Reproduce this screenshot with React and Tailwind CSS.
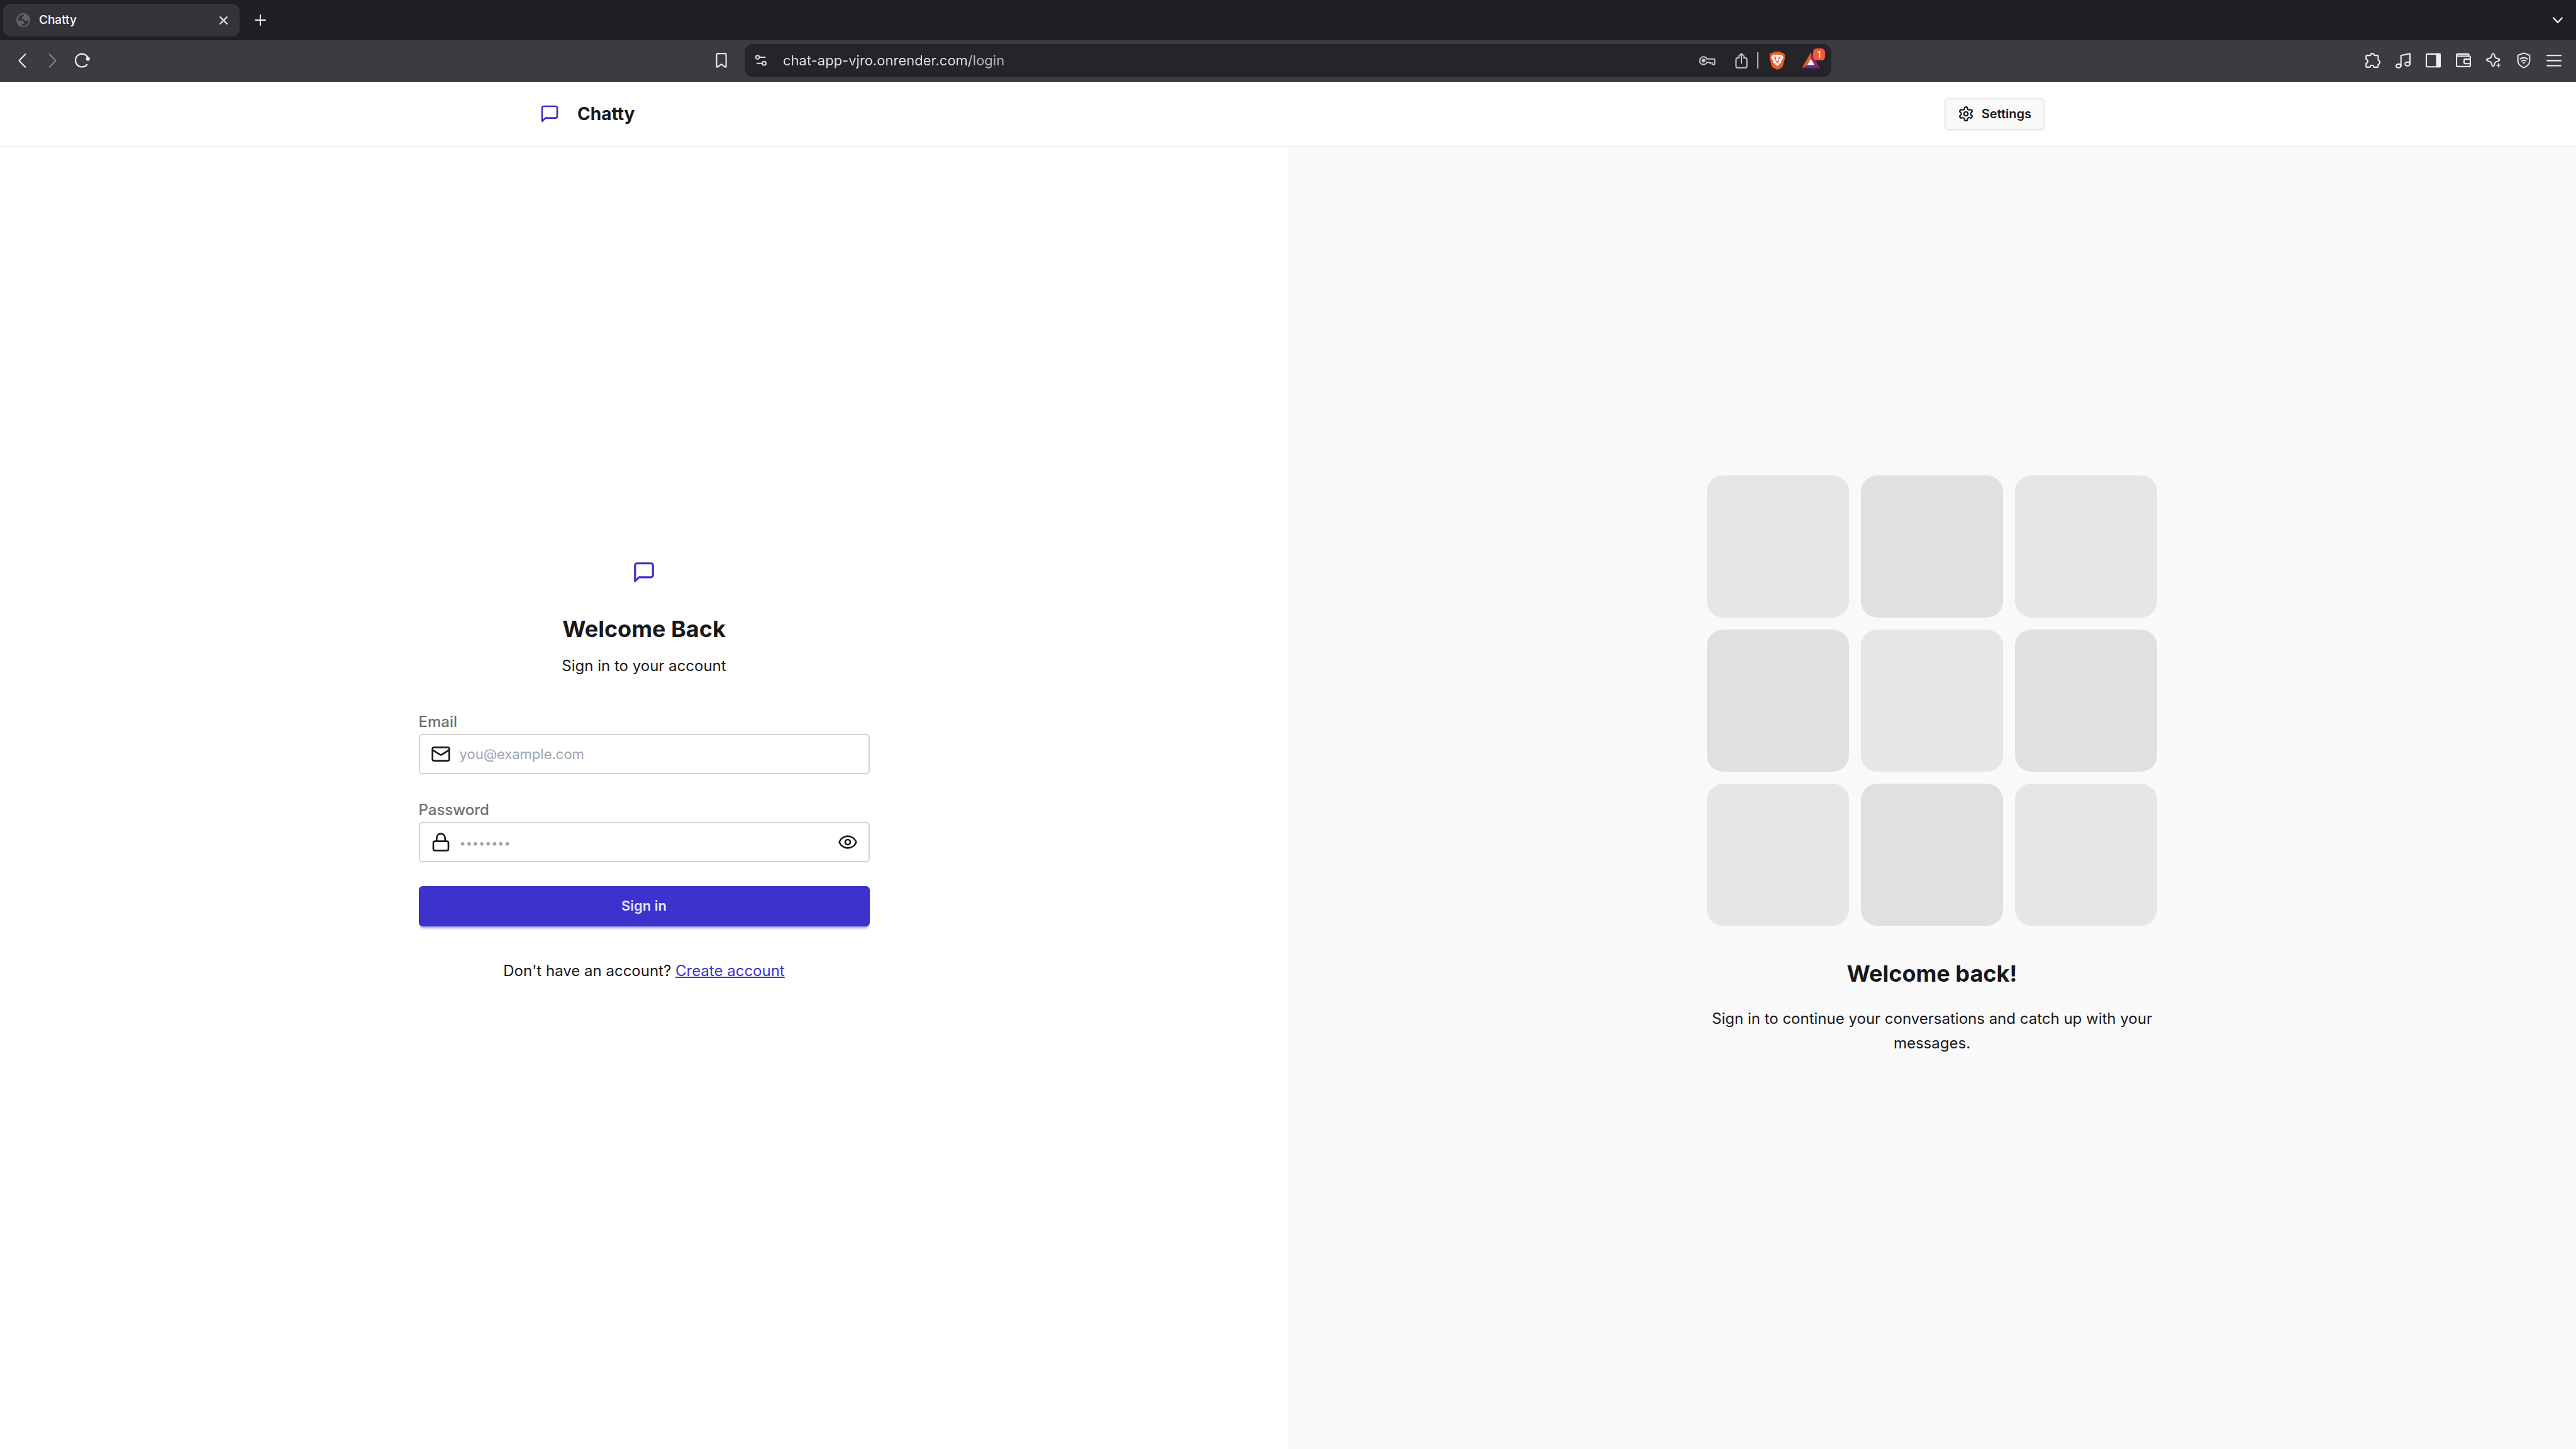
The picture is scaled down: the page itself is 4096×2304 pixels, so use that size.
import { useState } from "react";
import { Mail, Lock, Eye, EyeOff } from "lucide-react";

const Line = ({ box, className, width = 2.6, children }) => (
  <svg
    viewBox={box}
    className={className}
    fill="none"
    stroke="currentColor"
    strokeWidth={width}
    strokeLinecap="round"
    strokeLinejoin="round"
    aria-hidden="true"
  >
    {children}
  </svg>
);

const MessageSquare = ({ className }) => (
  <Line box="0 0 24 24" className={className} width={2}>
    <path d="M21 15a2 2 0 0 1-2 2H7l-4 4V5a2 2 0 0 1 2-2h14a2 2 0 0 1 2 2z" />
  </Line>
);

const Gear = ({ className }) => (
  <Line box="0 0 24 24" className={className} width={2}>
    <path d="M12.22 2h-.44a2 2 0 0 0-2 2v.18a2 2 0 0 1-1 1.730l-.43.25a2 2 0 0 1-2 0l-.15-.08a2 2 0 0 0-2.730.73l-.22.38a2 2 0 0 0 .73 2.730l.15.1a2 2 0 0 1 1 1.720v.51a2 2 0 0 1-1 1.740l-.15.09a2 2 0 0 0-.73 2.730l.22.38a2 2 0 0 0 2.730.73l.15-.08a2 2 0 0 1 2 0l.43.25a2 2 0 0 1 1 1.730V20a2 2 0 0 0 2 2h.44a2 2 0 0 0 2-2v-.18a2 2 0 0 1 1-1.730l.43-.25a2 2 0 0 1 2 0l.15.08a2 2 0 0 0 2.730-.73l.22-.39a2 2 0 0 0-.73-2.730l-.15-.08a2 2 0 0 1-1-1.740v-.5a2 2 0 0 1 1-1.740l.15-.09a2 2 0 0 0 .73-2.730l-.22-.38a2 2 0 0 0-2.730-.73l-.15.08a2 2 0 0 1-2 0l-.43-.25a2 2 0 0 1-1-1.730V4a2 2 0 0 0-2-2z" />
    <circle cx="12" cy="12" r="3" />
  </Line>
);

const GlobeIcon = () => (
  <svg viewBox="0 0 28 28" className="size-[22px] shrink-0" aria-hidden="true">
    <circle cx="14" cy="14" r="14" fill="#5f6368" />
    <path
      fill="#343338"
      d="M15.5 3C15.5 6 14 6.5 12.5 6.5 11.5 7 11 8 11 10.5c0 1 2 1 4 1 0 3 3 4 5 4s2.5-1.5 5-1.5A11 11 0 0 1 11 25v-3c3 .5 4.5-.5 4.5-2.5.5-3.500-2.5-3.700-3.500-5H3A11 11 0 0 1 15.5 3Z"
    />
  </svg>
);

const BraveLion = () => (
  <svg viewBox="0 0 32 36" className="h-[29px] w-[26px]" aria-hidden="true">
    <path
      fill="#f05a28"
      d="M10 0h12l3.5 3 3-.5L31.5 7l-1 3 .8 2.5-4.300 16c-.5 1.500-1.200 2.300-2.400 3.200L16 36l-8.600-4.300C6.200 30.800 5.500 30 5 28.500L.7 12.500l.8-2.500L.5 7l3-4.500 3 .5Z"
    />
    <path
      fill="#fff"
      d="M4 10.500 8.500 6l3.500.8 4-.8 4 .8 3.500-.8 4.500 4.500-.8 3.500-3.700 5 .8 2.500-2.800 2.300-2.500-1.600L16 20.600l-3 1.600-2.500 1.600-2.800-2.300.8-2.500L4.800 14Z"
    />
    <path fill="#fff" d="M10.800 24.400 16 21.800l5.200 2.600L16 28.500Z" />
    <path
      fill="#f05a28"
      d="M7 10.200l5.500-.2 1.500 1-.4 3 .6 3-2.700 1.700L14 20l2 .9 2-.9 2.500-1.300L17.800 17l.6-3-.4-3 1.500-1 5.500.2-3.500 1.200-1.600.8 3.600.7-2.500 1.600-1.500 0 .4 2 .4.7-2.300 1.100-2-.4-2 .4-2.300-1.100.4-.7.4-2-1.500 0-2.500-1.600 3.600-.7-1.600-.8Z"
    />
  </svg>
);

const BatLogo = () => (
  <svg viewBox="0 0 36 32" className="h-[26px] w-[29px]" aria-hidden="true">
    <path fill="#f15a2b" d="M18 0v12.700L10.700 25.300 0 31.500Z" />
    <path fill="#9e1f63" d="M18 0v12.700l7.300 12.600L36 31.500Z" />
    <path fill="#5f2c91" d="M0 31.500h36l-10.700-6.200H10.700Z" />
    <path fill="#fff" d="M18 12.700 10.700 25.300h14.600Z" />
  </svg>
);

const TOOLS = [
  {
    label: "Extensions",
    art: (
      <Line box="0 0 30 30" className="size-6">
        <path d="M2.800 5.200H9.400c.8 0 1-.5 1.200-1.200C11 2.300 12.200 1.400 14 1.400s3 .9 3.400 2.600c.2.700.4 1.200 1.200 1.200h5.600c.8 0 1.300.5 1.300 1.300v7.200c0 .8.500 1.100 1.200 1.300 1.500.500 2.100 2 2.100 3.700s-.600 3.300-2.100 3.800c-.7.2-1.200.5-1.200 1.300v3.500c0 .8-.5 1.300-1.300 1.300h-6.700c-.8 0-1-.6-1.100-1.300-.3-1.800-1.700-2.700-3.400-2.700s-3.100.9-3.400 2.700c-.1.700-.3 1.300-1.100 1.300H2.800c-.8 0-1.300-.5-1.300-1.300v-5.600c0-.8.500-1.100 1.200-1.300 1.600-.500 2.400-1.800 2.400-3.400S4.300 14 2.700 13.500c-.7-.2-1.200-.5-1.200-1.300V6.500c0-.8.5-1.300 1.300-1.300Z" />
      </Line>
    ),
  },
  {
    label: "Media",
    art: (
      <Line box="0 0 30 32" className="h-[26px] w-6">
        <ellipse cx="6" cy="27" rx="4.8" ry="3.7" />
        <ellipse cx="23.8" cy="23.2" rx="4.8" ry="3.7" />
        <path d="M10.900 27V6.200L28.700 2.600V23" />
      </Line>
    ),
  },
  {
    label: "Sidebar",
    art: (
      <Line box="0 0 30 30" className="size-6">
        <rect x="1.3" y="2.3" width="27.4" height="25.6" rx="1.3" />
        <path d="M22 2.300h5.400c.8 0 1.300.5 1.300 1.300v23c0 .8-.5 1.300-1.300 1.300H22Z" fill="currentColor" />
      </Line>
    ),
  },
  {
    label: "Wallet",
    art: (
      <Line box="0 0 30 30" className="size-6">
        <path d="M1.300 6.500V4.300c0-1.200.8-2 2-2h20.400c1.300 0 2 1 2 2.200v2" />
        <path d="M1.300 6.500h25.400c1.200 0 2 .8 2 2v16.600c0 1.200-.8 2-2 2H3.300c-1.200 0-2-.8-2-2Z" />
        <path d="M28.700 12.700H18c-1 0-1.700.7-1.700 1.700v5.400c0 1 .7 1.700 1.700 1.700h10.700" />
      </Line>
    ),
  },
  {
    label: "Leo AI",
    art: (
      <Line box="0 0 30 30" className="size-6" width={2.4}>
        <path d="M12 2.800c.7-1.900 3.300-1.900 4 0l1.800 5.400c.4 1 1 1.700 2 2l5.600 2c1.800.6 1.800 2.900 0 3.500l-5.600 2c-1 .3-1.600 1-2 2L16 25.100c-.7 1.900-3.300 1.900-4 0l-1.800-5.400c-.4-1-1-1.700-2-2l-5.600-2c-1.800-.6-1.800-2.900 0-3.500l5.600-2c1-.3 1.600-1 2-2Z" />
        <path
          d="M24.700 19.500l1.400 3.800 3.800 1.400-3.800 1.400-1.400 3.800-1.400-3.800-3.800-1.400 3.800-1.400Z"
          fill="currentColor"
          stroke="#3c3b3f"
          strokeWidth="3"
          paintOrder="stroke"
        />
      </Line>
    ),
  },
  {
    label: "VPN",
    art: (
      <Line box="0 0 30 32" className="h-[26px] w-6" width={2.4}>
        <path d="M15 1.500l11.700 4.300v11c0 6.600-6.200 11.300-11.700 13.700C9.500 28.100 3.300 23.400 3.300 16.800v-11Z" />
        <path d="M8 13.200c4-3.400 10-3.400 14 0M11 17.300c2.400-1.900 5.600-1.900 8 0M13.800 21h2.400" />
      </Line>
    ),
  },
  {
    label: "Menu",
    art: (
      <Line box="0 0 30 30" className="size-6">
        <path d="M1.300 5.300h27.400M1.300 15.500h27.400M1.300 25.600h27.400" />
      </Line>
    ),
  },
];

function BrowserChrome() {
  return (
    <div className="shrink-0 text-[#f0f0f4]">
      <div className="flex h-16 items-center bg-[#201f24] pr-[13px] pl-[5px]">
        <div className="flex h-13 w-[376px] items-center rounded-[12px] bg-[#343338] pr-[16px] pl-[21px]">
          <GlobeIcon />
          <span className="ml-[14px] flex-1 text-[19px] font-medium text-white">Chatty</span>
          <button type="button" aria-label="Close tab" className="grid size-5 place-items-center">
            <Line box="0 0 16 16" className="size-[13px]">
              <path d="M1.500 1.500l13 13M14.500 1.500l-13 13" />
            </Line>
          </button>
        </div>
        <button type="button" aria-label="New tab" className="ml-[21px] grid size-6 place-items-center">
          <Line box="0 0 22 22" className="size-[18px]">
            <path d="M11 1.300v19.400M1.300 11h19.400" />
          </Line>
        </button>
        <button type="button" aria-label="Search tabs" className="ml-auto grid size-8 place-items-center">
          <Line box="0 0 20 13" className="h-[11px] w-4" width={3}>
            <path d="M1.500 1.500l8.500 9 8.500-9" />
          </Line>
        </button>
      </div>

      <div className="flex h-[66px] items-center border-b-2 border-[#323135] bg-[#3c3b3f]">
        <div className="flex flex-1 items-center pl-[11px]">
          <button type="button" aria-label="Back" className="grid h-8 w-12 place-items-center">
            <Line box="0 0 16 28" className="h-[23px] w-[13px]">
              <path d="M14 1.500L2.500 13c-.6.600-.6 1.400 0 2L14 26.500" />
            </Line>
          </button>
          <button type="button" aria-label="Forward" className="grid h-8 w-12 place-items-center text-[#838287]">
            <Line box="0 0 16 28" className="h-[23px] w-[13px]">
              <path d="M2 1.500L13.500 13c.6.600.6 1.400 0 2L2 26.500" />
            </Line>
          </button>
          <button type="button" aria-label="Reload" className="grid h-8 w-12 place-items-center">
            <Line box="0 0 30 30" className="size-6" width={2.8}>
              <path d="M24.200 23.500A13 13 0 1 1 26 9.500" />
              <circle cx="26" cy="12" r="3.9" fill="currentColor" stroke="none" />
            </Line>
          </button>
          <button type="button" aria-label="Bookmark" className="mr-[21px] ml-auto grid h-8 w-8 place-items-center">
            <Line box="0 0 22 30" className="h-6 w-[18px]">
              <path d="M1.500 27V4c0-1.600 1-2.600 2.600-2.600h13.800c1.600 0 2.600 1 2.600 2.600v23c0 1.300-1.300 1.900-2.300 1L11 22.500 3.800 28c-1 .9-2.300.3-2.300-1Z" />
            </Line>
          </button>
        </div>

        <div className="flex h-13 w-[1728px] items-center rounded-[13px] bg-[#252429] pr-[18px] pl-4 text-[#c5c4c9]">
          <button type="button" aria-label="Site information" className="text-[#dcdbe0]">
            <Line box="0 0 24 23" className="h-[18px] w-5">
              <circle cx="5" cy="5.2" r="3.7" />
              <path d="M10.500 5.200H20.500M4 17.700h9.500" />
              <circle cx="18.5" cy="17.5" r="3.7" />
            </Line>
          </button>
          <input
            aria-label="Address"
            defaultValue="chat-app-vjro.onrender.com/login"
            className="ml-[25px] min-w-0 flex-1 bg-[linear-gradient(90deg,#e2e1e5_298px,#b9b8bd_298px)] bg-clip-text text-[22px] text-transparent outline-none"
          />
          <button type="button" aria-label="Saved passwords" className="mr-[31px]">
            <Line box="0 0 33 19" className="h-[15px] w-[27px]">
              <path d="M16.300 6H30c1 0 1.700.7 1.700 1.700v8c0 .9-.5 1.500-1.400 1.500h-2.500c-.8 0-1.300-.5-1.300-1.300v-2.200M16.300 12.800h6.500v2.800" />
              <path d="M16.300 6A7.800 7.800 0 1 0 16.300 12.800" />
              <circle cx="9.2" cy="9.3" r="3.9" fill="currentColor" stroke="none" />
            </Line>
          </button>
          <button type="button" aria-label="Share" className="mr-[15px]">
            <Line box="0 0 24 31" className="h-[25px] w-[20px]">
              <path d="M7.500 10H4.500c-1.900 0-3.200 1.300-3.200 3.200v13c0 1.900 1.300 3.200 3.200 3.200h15c1.900 0 3.200-1.300 3.200-3.200v-13c0-1.900-1.300-3.200-3.200-3.200h-3M12 20.500V2M6.800 6.700L12 1.500l5.200 5.200" />
            </Line>
          </button>
          <span className="h-[26px] w-0.5 bg-[#b4b3b8]" />
          <button type="button" aria-label="Brave Shields" className="ml-[17px]">
            <BraveLion />
          </button>
          <button type="button" aria-label="Brave Rewards, 1 notice" className="relative ml-[26px]">
            <BatLogo />
            <span className="absolute -top-[6px] -right-[8px] grid size-[19px] place-items-center rounded-[6px] bg-[#e95d3c] text-[14px] leading-none font-medium text-white">
              1
            </span>
          </button>
        </div>

        <div className="flex flex-1 justify-end pr-[11px]">
          {TOOLS.map(({ label, art }) => (
            <button key={label} type="button" aria-label={label} className="grid h-8 w-12 place-items-center">
              {art}
            </button>
          ))}
        </div>
      </div>
    </div>
  );
}

function Navbar() {
  return (
    <header className="shrink-0 border-b-2 border-[#eeeeee] bg-white">
      <div className="mx-auto flex h-[102px] max-w-[2458px] items-center justify-between px-[26px]">
        <a href="/" className="flex items-center gap-[15px]">
          <span className="grid size-[58px] place-items-center">
            <MessageSquare className="size-8 text-[#3d32cd]" />
          </span>
          <h1 className="text-[28px] font-bold">Chatty</h1>
        </a>
        <button
          type="button"
          className="flex h-[51px] items-center gap-[12px] rounded-[6px] border-2 border-[#e8e8e8] bg-[#f9f9f9] px-[19px] text-[20px] font-semibold shadow-sm shadow-black/5"
        >
          <Gear className="size-[26px]" />
          Settings
        </button>
      </div>
    </header>
  );
}

function Field({ id, label, icon: Icon, children, ...input }) {
  return (
    <div>
      <label htmlFor={id} className="block text-[24px] leading-[38px] font-medium text-[#707072]">
        {label}
      </label>
      <div className="flex h-16 items-center rounded-[6px] border-2 border-[#d1d1d1] bg-white px-[17px]">
        <Icon className="size-8 shrink-0" />
        <input
          id={id}
          className="ml-[14px] h-full min-w-0 flex-1 text-[22px] outline-none placeholder:text-[#9ca3af] [&[type=password]]:placeholder:text-[18px]"
          {...input}
        />
        {children}
      </div>
    </div>
  );
}

function LoginForm() {
  const [visible, setVisible] = useState(false);
  return (
    <section className="flex items-center justify-center px-8 pb-[104px]">
      <div className="w-full max-w-[717px]">
        <div className="mb-[51px] flex flex-col items-center gap-[13px]">
          <span className="grid size-[77px] place-items-center">
            <MessageSquare className="size-[38px] text-[#3d32cd]" />
          </span>
          <h2 className="mt-[13px] text-[36px] leading-[51px] font-bold">Welcome Back</h2>
          <p className="text-[24px] leading-[39px]">Sign in to your account</p>
        </div>
        <form className="flex flex-col gap-[38px]" onSubmit={(e) => e.preventDefault()}>
          <Field id="email" label="Email" icon={Mail} type="email" placeholder="you@example.com" />
          <Field
            id="password"
            label="Password"
            icon={Lock}
            type={visible ? "text" : "password"}
            placeholder="••••••••"
          >
            <button type="button" aria-label="Toggle password visibility" onClick={() => setVisible(!visible)}>
              {visible ? <EyeOff className="size-8" /> : <Eye className="size-8" />}
            </button>
          </Field>
          <button
            type="submit"
            className="h-16 rounded-[6px] border-2 border-[#3a2fc4] bg-[#3d32cd] text-[22px] font-semibold text-[#e0e7ff] shadow-[0_5px_3px_-3px_#3d32cd4d,0_6px_5px_-3px_#3d32cd4d]"
          >
            Sign in
          </button>
        </form>
        <p className="mt-[51px] text-center text-[24px] leading-[39px]">
          Don&apos;t have an account?{" "}
          <a href="/signup" className="text-[#3d32cd] underline decoration-2">
            Create account
          </a>
        </p>
      </div>
    </section>
  );
}

function Pattern() {
  return (
    <section className="flex flex-col items-center justify-center bg-[#f9f9f9] px-8 pb-[104px] text-center">
      <div className="mb-[51px] grid w-full max-w-[717px] grid-cols-3 gap-[19px]">
        {Array.from({ length: 9 }, (_, i) => (
          <div
            key={i}
            className={`aspect-square rounded-[26px] ${i % 2 === 0 ? "bg-[#e6e6e6]" : "bg-[#e0e0e0]"}`}
          />
        ))}
      </div>
      <h2 className="mb-[26px] text-[36px] leading-[51px] font-bold">Welcome back!</h2>
      <p className="max-w-[760px] text-[24px] leading-[39px]">
        Sign in to continue your conversations and catch up with your messages.
      </p>
    </section>
  );
}

export default function App() {
  return (
    <div className="flex min-h-screen flex-col bg-white font-['Inter',sans-serif] text-[#18181b]">
      <BrowserChrome />
      <Navbar />
      <main className="grid flex-1 grid-cols-2">
        <LoginForm />
        <Pattern />
      </main>
    </div>
  );
}
